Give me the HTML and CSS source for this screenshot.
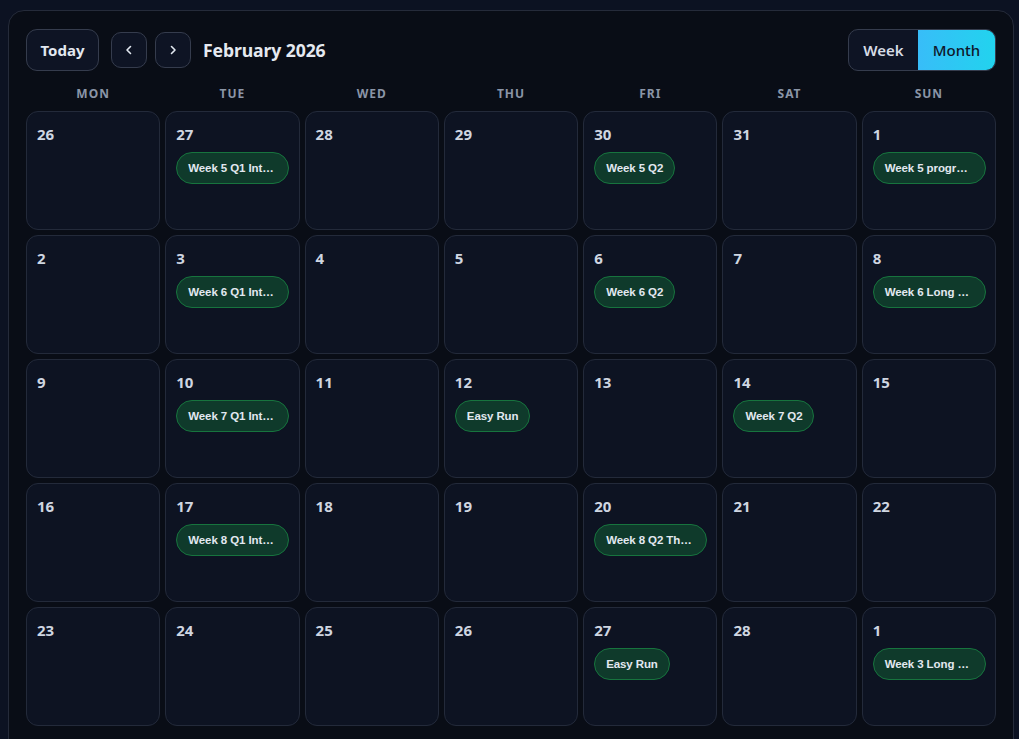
FILE: index.html
```html
<!DOCTYPE html>
<html>
<head>
<meta charset="utf-8">
<link rel="stylesheet" href="styles.css">
</head>
<body>
<div class="panel">
  <div class="toolbar">
    <div class="left">
      <button class="btn today">Today</button>
      <button class="btn icon" aria-label="Previous"><svg width="14" height="14" viewBox="0 0 14 14"><path d="M8.5 3.5 5 7l3.5 3.5" fill="none" stroke="#e2e8f0" stroke-width="1.6" stroke-linecap="round" stroke-linejoin="round"/></svg></button>
      <button class="btn icon" aria-label="Next"><svg width="14" height="14" viewBox="0 0 14 14"><path d="M5.5 3.5 9 7l-3.5 3.5" fill="none" stroke="#e2e8f0" stroke-width="1.6" stroke-linecap="round" stroke-linejoin="round"/></svg></button>
      <h1 class="title">February 2026</h1>
    </div>
    <div class="toggle">
      <button class="tg">Week</button>
      <button class="tg active">Month</button>
    </div>
  </div>
  <div class="dow">
    <div>MON</div><div>TUE</div><div>WED</div><div>THU</div><div>FRI</div><div>SAT</div><div>SUN</div>
  </div>
  <div class="grid">
    <div class="cell"><div class="num">26</div></div>
    <div class="cell"><div class="num">27</div><div class="ev">Week 5 Q1 Intervals</div></div>
    <div class="cell"><div class="num">28</div></div>
    <div class="cell"><div class="num">29</div></div>
    <div class="cell"><div class="num">30</div><div class="ev">Week 5 Q2</div></div>
    <div class="cell"><div class="num">31</div></div>
    <div class="cell"><div class="num">1</div><div class="ev">Week 5 progression</div></div>

    <div class="cell"><div class="num">2</div></div>
    <div class="cell"><div class="num">3</div><div class="ev">Week 6 Q1 Intervals</div></div>
    <div class="cell"><div class="num">4</div></div>
    <div class="cell"><div class="num">5</div></div>
    <div class="cell"><div class="num">6</div><div class="ev">Week 6 Q2</div></div>
    <div class="cell"><div class="num">7</div></div>
    <div class="cell"><div class="num">8</div><div class="ev">Week 6 Long Run</div></div>

    <div class="cell"><div class="num">9</div></div>
    <div class="cell"><div class="num">10</div><div class="ev">Week 7 Q1 Intervals</div></div>
    <div class="cell"><div class="num">11</div></div>
    <div class="cell"><div class="num">12</div><div class="ev">Easy Run</div></div>
    <div class="cell"><div class="num">13</div></div>
    <div class="cell"><div class="num">14</div><div class="ev">Week 7 Q2</div></div>
    <div class="cell"><div class="num">15</div></div>

    <div class="cell"><div class="num">16</div></div>
    <div class="cell"><div class="num">17</div><div class="ev">Week 8 Q1 Intervals</div></div>
    <div class="cell"><div class="num">18</div></div>
    <div class="cell"><div class="num">19</div></div>
    <div class="cell"><div class="num">20</div><div class="ev">Week 8 Q2 Threshold</div></div>
    <div class="cell"><div class="num">21</div></div>
    <div class="cell"><div class="num">22</div></div>

    <div class="cell"><div class="num">23</div></div>
    <div class="cell"><div class="num">24</div></div>
    <div class="cell"><div class="num">25</div></div>
    <div class="cell"><div class="num">26</div></div>
    <div class="cell"><div class="num">27</div><div class="ev">Easy Run</div></div>
    <div class="cell"><div class="num">28</div></div>
    <div class="cell"><div class="num">1</div><div class="ev">Week 3 Long Run</div></div>
  </div>
</div>
</body>
</html>
```

FILE: styles.css
```css
* { box-sizing: border-box; }
html, body { margin: 0; padding: 0; }
body {
  background: #0c1222;
  font-family: "Noto Sans", "Open Sans", sans-serif;
  color: #e2e8f0;
  height: 739px;
  overflow: hidden;
}
.panel {
  margin: 10px 5px 0 8px;
  height: 760px;
  background: #090d16;
  border: 1px solid #252b3a;
  border-radius: 16px;
  padding: 18px 17px 0 17px;
}
.toolbar {
  display: flex;
  justify-content: space-between;
  align-items: center;
  height: 42px;
}
.left { display: flex; align-items: center; }
.btn {
  background: #0e1424;
  border: 1px solid #353c4d;
  color: #e2e8f0;
  font-family: inherit;
  font-weight: 700;
  cursor: pointer;
  padding: 0;
}
.today {
  width: 73px;
  height: 42px;
  border-radius: 11px;
  font-size: 15px;
  margin-right: 12px;
}
.icon {
  width: 36px;
  height: 36px;
  border-radius: 10px;
  display: flex;
  align-items: center;
  justify-content: center;
  margin-right: 8px;
}
.title {
  margin: 0 0 0 4px;
  font-size: 17.6px;
  font-weight: 700;
  color: #e5e9f0;
  letter-spacing: -0.1px;
}
.toggle {
  display: flex;
  height: 42px;
  border: 1px solid #353c4d;
  border-radius: 10px;
  overflow: hidden;
  background: #0e1424;
}
.tg {
  border: 0;
  background: transparent;
  font-family: inherit;
  font-size: 15px;
  color: #d6dce6;
  font-weight: 600;
  padding: 0;
  width: 69px;
}
.tg.active {
  width: 77px;
  background: linear-gradient(90deg, #38bdf8, #22d3ee);
  color: #0f172a;
  font-weight: 500;
}
.dow {
  display: grid;
  grid-template-columns: repeat(7, 1fr);
  column-gap: 5px;
  height: 40px;
  padding-top: 4px;
  align-items: center;
}
.dow div {
  text-align: center;
  font-size: 12px;
  font-weight: 700;
  letter-spacing: 1px;
  color: #8b95a7;
}
.grid {
  display: grid;
  grid-template-columns: repeat(7, 1fr);
  grid-auto-rows: 119px;
  gap: 5px;
}
.cell {
  background: #0d1322;
  border: 1px solid #232a3a;
  border-radius: 12px;
  padding: 11px 10px 0 10px;
  display: flex;
  flex-direction: column;
  align-items: flex-start;
  min-width: 0;
}
.num {
  font-size: 15px;
  font-weight: 700;
  color: #cfd6e1;
  line-height: 22px;
  margin-bottom: 7px;
}
.ev {
  max-width: 113px;
  height: 32px;
  line-height: 30px;
  padding: 0 11px;
  border: 1px solid #17743e;
  background: #0f3a2b;
  border-radius: 16px;
  font-family: "Liberation Sans", Arial, sans-serif;
  font-weight: 700;
  font-size: 11.5px;
  letter-spacing: -0.1px;
  color: #e2e8f0;
  white-space: nowrap;
  overflow: hidden;
  text-overflow: ellipsis;
}
```
